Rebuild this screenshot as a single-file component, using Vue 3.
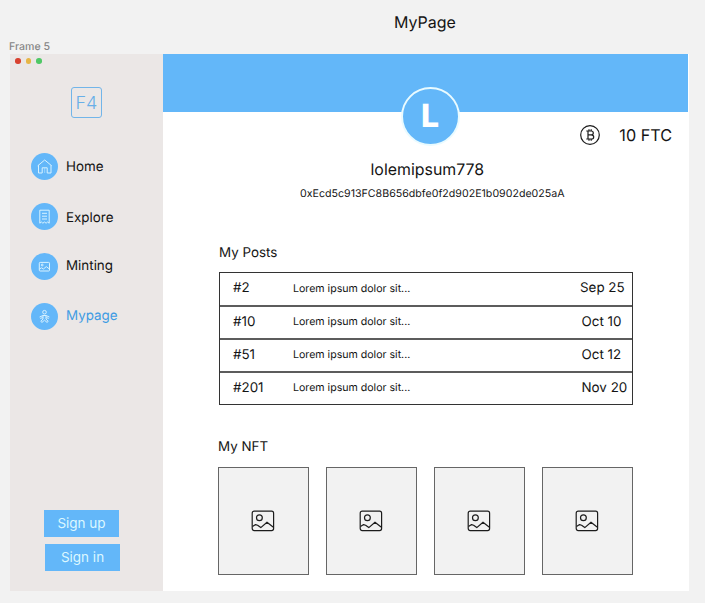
<script setup>
const nav = [
  { name: 'Home', icon: 'home' },
  { name: 'Explore', icon: 'receipt' },
  { name: 'Minting', icon: 'image' },
  { name: 'Mypage', icon: 'person', active: true },
]
const posts = [
  { id: '#2', text: 'Lorem ipsum dolor sit...', date: 'Sep 25' },
  { id: '#10', text: 'Lorem ipsum dolor sit...', date: 'Oct 10' },
  { id: '#51', text: 'Lorem ipsum dolor sit...', date: 'Oct 12' },
  { id: '#201', text: 'Lorem ipsum dolor sit...', date: 'Nov 20' },
]
</script>

<template>
  <div class="canvas">
    <h1 class="title">MyPage</h1>
    <div class="frame-label">Frame 5</div>
    <div class="frame">
      <aside class="sidebar">
        <div class="lights"><i class="red"></i><i class="yellow"></i><i class="green"></i></div>
        <div class="logo">F4</div>
        <nav class="nav">
          <a v-for="n in nav" :key="n.name" class="item" :class="[n.icon, { active: n.active }]">
            <span class="bubble">
              <svg v-if="n.icon === 'home'" width="27" height="27" viewBox="0 0 27 27">
                <path d="M7.5 12.2V20H11.2V14.8H16.2V20H20V12.2M6.7 12.8L13.7 7L20.7 12.8" />
                <path d="M13.7 15V20" opacity=".5" />
              </svg>
              <svg v-else-if="n.icon === 'receipt'" width="27" height="27" viewBox="0 0 27 27">
                <path d="M8.8 7.2H18.2V20.2L16.6 19L15.1 20.2L13.5 19L11.9 20.2L10.4 19L8.8 20.2ZM11 10.3H16M11 13.2H16M11 16H16" />
              </svg>
              <svg v-else-if="n.icon === 'image'" width="27" height="27" viewBox="0 0 27 27">
                <rect x="8.3" y="9.4" width="10.2" height="8.6" rx=".8" />
                <circle cx="11.2" cy="12" r=".9" />
                <path d="M8.4 16L10.6 14.8L12.4 16L15.3 13.6L18.4 16" />
              </svg>
              <svg v-else width="27" height="27" viewBox="0 0 27 27">
                <circle cx="13.5" cy="9.2" r="1.8" />
                <path d="M8.6 14L12 12.5H15L18.4 14M12 12.5V16M15 12.5V16M9.2 15.4L11.8 14.6M17.8 15.4L15.2 14.6M12 16L9.8 18.4L11 19.4L13.5 17.2L16 19.4L17.2 18.4L15 16" />
              </svg>
            </span>
            <span class="name">{{ n.name }}</span>
          </a>
        </nav>
        <div class="auth">
          <button>Sign up</button>
          <button>Sign in</button>
        </div>
      </aside>
      <main class="main">
        <div class="banner"></div>
        <div class="avatar">L</div>
        <div class="balance">
          <svg width="20" height="20" viewBox="0 0 20 20">
            <circle cx="10" cy="10" r="9.3" />
            <path d="M6.3 6H11.2C14 6 14 9.8 11.2 9.8H8M11.2 9.8C14.6 9.8 14.4 14 11.4 14H6.3M8 6V14M9 4.2V6M11.2 4.2V6M9 14V15.8M11.2 14V15.8" />
          </svg>
          <span>10 FTC</span>
        </div>
        <div class="user">lolemipsum778</div>
        <div class="address">0xEcd5c913FC8B656dbfe0f2d902E1b0902de025aA</div>
        <h2 class="posts-title">My Posts</h2>
        <div class="posts">
          <div v-for="p in posts" :key="p.id" class="post">
            <span class="id">{{ p.id }}</span>
            <span class="text">{{ p.text }}</span>
            <span class="date">{{ p.date }}</span>
          </div>
        </div>
        <h2 class="nft-title">My NFT</h2>
        <div class="nfts">
          <div v-for="i in 4" :key="i" class="nft">
            <svg width="24" height="22" viewBox="0 0 24 22">
              <rect x="1.2" y="1.2" width="21.4" height="19.4" rx="2" />
              <circle cx="8.4" cy="7.8" r="2.9" />
              <path d="M1.5 16.6L4.6 14.6L6.6 15.2L9.8 17.6L16 12.2L22.4 17.2" />
            </svg>
          </div>
        </div>
      </main>
    </div>
  </div>
</template>

<style>
body { margin: 0; background: #f2f2f2; }
</style>

<style scoped>
* { box-sizing: border-box; }
.canvas { width: 705px; height: 603px; overflow: hidden; background: #f2f2f2; font-family: Inter, sans-serif; color: #141414; white-space: nowrap; text-rendering: geometricPrecision; }
h1, h2 { margin: 0; font-weight: 400; }
.title { height: 40px; padding: 12px 0 0 394px; font-size: 16px; line-height: 20px; }
.frame-label { height: 14px; padding-left: 9px; font-size: 10.6px; font-weight: 500; line-height: 13px; color: #868686; }
.frame { display: flex; width: 679px; height: 537px; margin-left: 10px; background: #fff; }
.sidebar { display: flex; flex-direction: column; width: 153px; background: #ebe7e6; }
.lights { display: flex; gap: 5px; padding: 4px 0 0 5px; height: 33px; }
.lights i { width: 5.6px; height: 5.6px; border-radius: 50%; }
.red { background: #d8412f; }
.yellow { background: #e6b545; }
.green { background: #4fc866; }
.logo { width: 31px; height: 31px; margin-left: 61px; border: 1.3px solid #72b5e9; border-radius: 3px; color: #68afe8; font-size: 18px; font-weight: 300; line-height: 31px; text-align: center; }
.nav { display: flex; flex-direction: column; gap: 23px; padding: 35px 0 0 21px; }
.item { display: flex; align-items: center; gap: 8px; height: 27px; font-size: 13.4px; }
.bubble { width: 27px; height: 27px; border-radius: 50%; background: #63b7f9; }
svg { display: block; fill: none; stroke: #1c1c1c; stroke-width: 1.2; stroke-linejoin: round; }
.bubble svg { stroke: #d8f2ff; stroke-width: 1; }
.name { line-height: 20px; margin-top: 1px; }
.receipt .name { margin-top: 3px; }
.image .name { margin-top: -1px; }
.active .name { color: #3f9ce3; margin-top: -1px; }
.auth { display: flex; flex-direction: column; gap: 7px; margin: auto 0 20px 34px; }
.auth button { width: 75px; height: 27px; padding: 0; border: 0; background: #63b7f9; color: #dcf7ff; font: 13.5px/27px Inter, sans-serif; }
.auth button + button { margin-left: 1px; }
.main { display: flex; flex-direction: column; width: 526px; }
.banner { width: 525px; height: 58px; flex: none; background: #63b7f9; }
.avatar { z-index: 1; width: 59px; height: 59px; flex: none; margin: -25px 0 0 237.5px; border: 2px solid #e9fbff; border-radius: 50%; background: #63b7f9; color: #fff; font-size: 32px; font-weight: 850; line-height: 54px; text-align: center; }
.balance { display: flex; align-items: center; justify-content: flex-end; gap: 19px; height: 22px; margin: -22px 17px 0 0; font-size: 16.2px; }
.user { height: 22px; margin: 13px 0 0 207.5px; font-size: 15.9px; line-height: 22px; }
.address { height: 14px; margin: 6px 0 0 137px; font-size: 10.65px; line-height: 14px; }
.posts-title { height: 20px; margin: 42px 0 0 56px; font-size: 13.4px; line-height: 20px; }
.posts { width: 414px; height: 133px; margin: 9px 0 0 56px; border: 1px solid #333; }
.post { display: grid; grid-template-columns: 60px 1fr 45px; align-items: center; height: 32px; padding: 0 7px 2px 13px; font-size: 13.4px; }
.post + .post { height: 33px; border-top: 2px solid #5c5c5c; }
.post + .post .date { padding-left: 1.5px; }
.text { font-size: 10.6px; }
.nft-title { height: 20px; margin: 32px 0 0 55px; font-size: 13.4px; line-height: 20px; }
.nfts { display: grid; grid-template-columns: repeat(4, 91px); justify-content: space-between; width: 415.5px; margin: 10px 0 0 54.5px; }
.nft { display: flex; align-items: center; justify-content: center; height: 108px; padding-bottom: 1px; border: 1px solid #666; background: #f2f2f2; }
</style>
